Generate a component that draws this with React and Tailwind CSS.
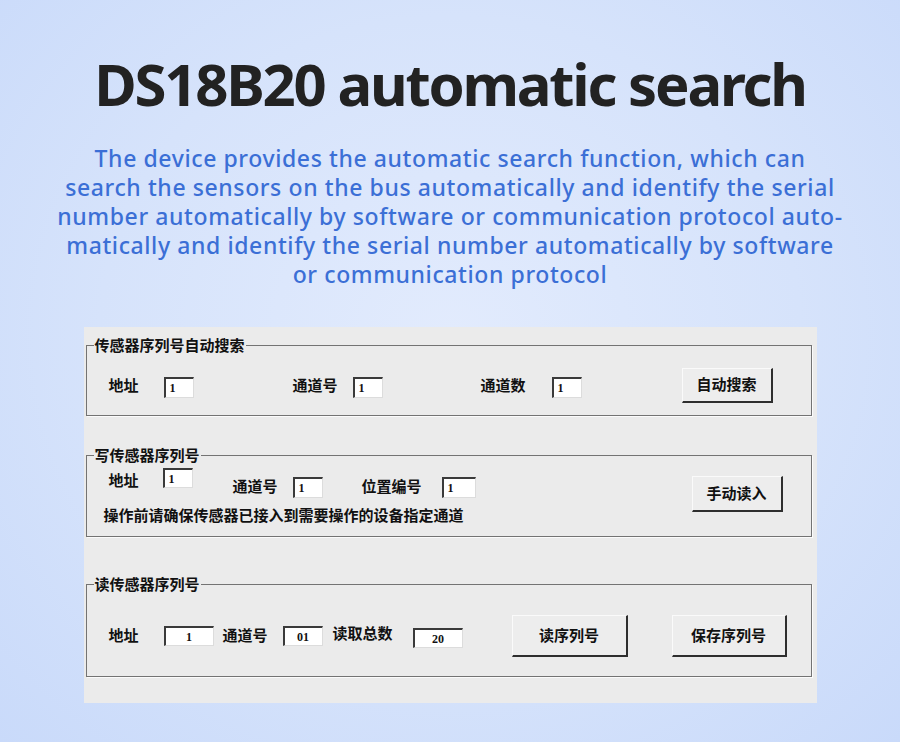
import React from 'react';

const cjk = { fontFamily: '"Noto Sans CJK SC", "Noto Sans", sans-serif' };

const Field = ({ value, w = 30, h = 21, center = false, className = '' }) => (
  <div
    className={`bg-white border-t-2 border-l-2 border-b border-r border-t-[#3a3a3a] border-l-[#3a3a3a] border-b-[#dcdcdc] border-r-[#dcdcdc] text-[12px] font-bold leading-none flex items-center text-[#111] ${center ? 'justify-center' : 'pl-[4px]'} ${className}`}
    style={{ width: w, height: h, fontFamily: '"Liberation Serif", serif' }}
  >
    {value}
  </div>
);

const WinButton = ({ children, w, h, className = '' }) => (
  <div
    className={`flex items-center justify-center bg-[#ededed] border-t border-l border-t-[#fafafa] border-l-[#fafafa] border-b-2 border-r-2 border-b-[#2e2e2e] border-r-[#2e2e2e] text-[15px] font-bold text-[#111] ${className}`}
    style={{ width: w, height: h }}
  >
    {children}
  </div>
);

const Label = ({ children, className = '' }) => (
  <span className={`text-[15px] font-bold leading-[20px] text-[#111] whitespace-nowrap ${className}`}>{children}</span>
);

const Group = ({ title, children, className = '' }) => (
  <fieldset className={`border border-[#737373] shadow-[1px_1px_0_#fbfbfb] ${className}`}>
    <legend className="ml-[7px] px-[1px] text-[15px] font-bold leading-[20px] text-[#111]">{title}</legend>
    {children}
  </fieldset>
);

export default function App() {
  return (
    <div
      className="w-[900px] h-[742px] flex flex-col items-center bg-[radial-gradient(ellipse_at_50%_45%,#e2ebfd_0%,#d6e3fb_55%,#c9dafa_100%)]"
      style={cjk}
    >
      <h1
        className="mt-[49px] text-[58px] font-bold leading-[70px] text-[#222] tracking-[-2.2px]"
        style={{ fontFamily: '"Noto Sans", "Open Sans", sans-serif' }}
      >
        DS18B20 automatic search
      </h1>
      <p
        className="mt-[25px] text-center text-[23px] font-medium leading-[29px] text-[#3b6fd6] tracking-[0.6px]"
        style={{ fontFamily: '"Noto Sans", "Open Sans", sans-serif' }}
      >
        The device provides the automatic search function, which can
        <br />
        search the sensors on the bus automatically and identify the serial
        <br />
        number automatically by software or communication protocol auto-
        <br />
        matically and identify the serial number automatically by software
        <br />
        or communication protocol
      </p>

      <div className="mt-[38px] w-[733px] h-[376px] bg-[#ebebeb] pl-[2px] pr-[5px] pt-[8px] flex flex-col">
        <Group title="传感器序列号自动搜索">
          <div className="h-[60px] flex items-center pl-[22px]">
            <Label>地址</Label>
            <Field value="1" className="ml-[25px] mt-[4px]" />
            <Label className="ml-[99px]">通道号</Label>
            <Field value="1" className="ml-[15px] mt-[4px]" />
            <Label className="ml-[98px]">通道数</Label>
            <Field value="1" className="ml-[26px] mt-[4px]" />
            <WinButton w={91} h={35} className="ml-[100px]">自动搜索</WinButton>
          </div>
        </Group>

        <Group title="写传感器序列号" className="mt-[29px]">
          <div className="h-[71px] flex items-start justify-between pr-[28px]">
            <div className="flex flex-col">
              <div className="flex items-start pl-[22px]">
                <Label className="mt-[5px]">地址</Label>
                <Field value="1" h={20} className="ml-[24px] mt-[3px]" />
                <Label className="ml-[40px] mt-[11px]">通道号</Label>
                <Field value="1" className="ml-[15px] mt-[12px]" />
                <Label className="ml-[39px] mt-[11px]">位置编号</Label>
                <Field value="1" w={34} className="ml-[20px] mt-[12px]" />
              </div>
              <Label className="ml-[17px] mt-[7px]">操作前请确保传感器已接入到需要操作的设备指定通道</Label>
            </div>
            <WinButton w={91} h={36} className="mt-[11px]">手动读入</WinButton>
          </div>
        </Group>

        <Group title="读传感器序列号" className="mt-[37px]">
          <div className="h-[82px] flex items-center pl-[22px]">
            <Label>地址</Label>
            <Field value="1" w={50} h={20} center className="ml-[25px] mt-[2px]" />
            <Label className="ml-[9px]">通道号</Label>
            <Field value="01" w={40} h={20} center className="ml-[15px] mt-[2px]" />
            <Label className="ml-[10px] -mt-[4px]">读取总数</Label>
            <Field value="20" w={50} h={20} center className="ml-[20px] mt-[6px]" />
            <WinButton w={116} h={42} className="ml-[49px] mt-[2px]">读序列号</WinButton>
            <WinButton w={115} h={42} className="ml-[44px] mt-[2px]">保存序列号</WinButton>
          </div>
        </Group>
      </div>
    </div>
  );
}
